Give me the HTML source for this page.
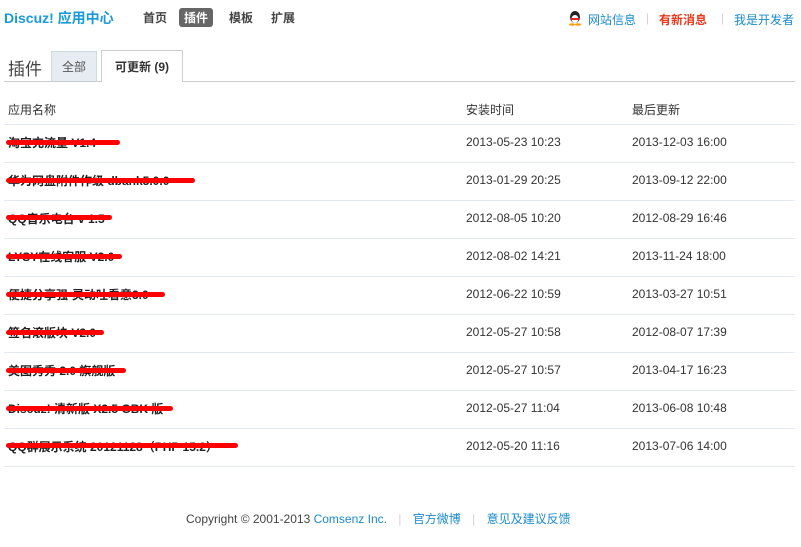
<!DOCTYPE html>
<html><head><meta charset="utf-8"><style>
*{margin:0;padding:0;box-sizing:border-box}
body{width:801px;height:547px;background:#fff;font-family:"Liberation Sans","Noto Sans CJK SC",sans-serif;font-size:12px;color:#333;position:relative;overflow:hidden}
.a{position:absolute;white-space:nowrap}
.logo{left:4px;top:8px;font-size:14px;font-weight:bold;color:#1a9bd7}
.nav{top:9px;font-size:12px;font-weight:bold;color:#444}
.navon{background:#666;color:#fff;border-radius:3px;padding:1px 5px}
.tl{top:11px;font-size:12px;color:#1a8ac8}
.sep{top:11px;color:#dcc}
.hline{position:absolute;left:4px;width:791px;height:1px;background:#e3e9ef}
.row{position:absolute;left:8px;font-size:12px;font-weight:bold;color:#222}
.red{position:absolute;height:5px;background:#f00;border-radius:3px;left:6px}
</style></head><body>
<div class="a logo">Discuz! 应用中心</div>
<div class="a nav" style="left:143px">首页</div>
<div class="a nav navon" style="left:179px;top:8px">插件</div>
<div class="a nav" style="left:229px">模板</div>
<div class="a nav" style="left:271px">扩展</div>
<svg class="a" style="left:568px;top:10px" width="14" height="16" viewBox="0 0 14 16"><ellipse cx="7" cy="7" rx="5" ry="6" fill="#222"/><ellipse cx="7" cy="9" rx="3.5" ry="4" fill="#fff"/><rect x="3" y="8" width="8" height="2" fill="#e22"/><ellipse cx="4" cy="14.5" rx="3" ry="1.3" fill="#f90"/><ellipse cx="10" cy="14.5" rx="3" ry="1.3" fill="#f90"/></svg>
<div class="a tl" style="left:588px">网站信息</div>
<div class="a sep" style="left:646px">|</div>
<div class="a tl" style="left:659px;color:#e83a1d;font-weight:bold">有新消息</div>
<div class="a sep" style="left:721px">|</div>
<div class="a tl" style="left:734px">我是开发者</div>

<div class="a" style="left:8px;top:55px;font-size:17px;color:#444">插件</div>
<div class="a" style="left:51px;top:51px;width:46px;height:31px;background:#e6ecf2;border:1px solid #cdd;border-bottom:none;color:#555;text-align:center;line-height:30px">全部</div>
<div class="a" style="left:101px;top:50px;width:82px;height:32px;background:#fff;border:1px solid #ccc;border-bottom:none;font-weight:bold;text-align:center;line-height:32px;z-index:2">可更新 (9)</div>
<div class="hline" style="top:81px;background:#ccc"></div>

<div class="a" style="left:8px;top:101px">应用名称</div>
<div class="a" style="left:466px;top:101px">安装时间</div>
<div class="a" style="left:632px;top:101px">最后更新</div>
<div class="hline" style="top:124px"></div>
<div class="hline" style="top:162px"></div>
<div class="hline" style="top:200px"></div>
<div class="hline" style="top:238px"></div>
<div class="hline" style="top:276px"></div>
<div class="hline" style="top:314px"></div>
<div class="hline" style="top:352px"></div>
<div class="hline" style="top:390px"></div>
<div class="hline" style="top:428px"></div>
<div class="hline" style="top:466px"></div>

<div class="a row" style="top:134px">淘宝充流量 V1.4</div><div class="red" style="top:140px;width:114px"></div>
<div class="a" style="left:466px;top:135px">2013-05-23 10:23</div><div class="a" style="left:632px;top:135px">2013-12-03 16:00</div>
<div class="a row" style="top:172px">华为网盘附件作级 dbank5.0.0</div><div class="red" style="top:178px;width:189px"></div>
<div class="a" style="left:466px;top:173px">2013-01-29 20:25</div><div class="a" style="left:632px;top:173px">2013-09-12 22:00</div>
<div class="a row" style="top:210px">QQ音乐电台 v 1.5</div><div class="red" style="top:215px;width:106px"></div>
<div class="a" style="left:466px;top:211px">2012-08-05 10:20</div><div class="a" style="left:632px;top:211px">2012-08-29 16:46</div>
<div class="a row" style="top:248px">LYSY在线客服 V2.0</div><div class="red" style="top:254px;width:116px"></div>
<div class="a" style="left:466px;top:249px">2012-08-02 14:21</div><div class="a" style="left:632px;top:249px">2013-11-24 18:00</div>
<div class="a row" style="top:286px">便捷分享强-灵动吐看意3.0</div><div class="red" style="top:292px;width:159px"></div>
<div class="a" style="left:466px;top:287px">2012-06-22 10:59</div><div class="a" style="left:632px;top:287px">2013-03-27 10:51</div>
<div class="a row" style="top:324px">签名滚版块 V2.0</div><div class="red" style="top:330px;width:98px"></div>
<div class="a" style="left:466px;top:325px">2012-05-27 10:58</div><div class="a" style="left:632px;top:325px">2012-08-07 17:39</div>
<div class="a row" style="top:362px">美图秀秀 2.0 旗舰版</div><div class="red" style="top:368px;width:120px"></div>
<div class="a" style="left:466px;top:363px">2012-05-27 10:57</div><div class="a" style="left:632px;top:363px">2013-04-17 16:23</div>
<div class="a row" style="top:400px">Discuz! 清新版 X2.5 GBK 版</div><div class="red" style="top:406px;width:167px"></div>
<div class="a" style="left:466px;top:401px">2012-05-27 11:04</div><div class="a" style="left:632px;top:401px">2013-06-08 10:48</div>
<div class="a row" style="top:438px">QQ群展示系统 20121128（PHP 15.2）</div><div class="red" style="top:443px;width:232px"></div>
<div class="a" style="left:466px;top:439px">2012-05-20 11:16</div><div class="a" style="left:632px;top:439px">2013-07-06 14:00</div>

<div class="a" style="left:186px;top:510px;color:#444">Copyright © 2001-2013 <span style="color:#1a8ac8">Comsenz Inc.</span> <span style="color:#dcc;margin:0 8px">|</span> <span style="color:#1a8ac8">官方微博</span> <span style="color:#dcc;margin:0 8px">|</span> <span style="color:#1a8ac8">意见及建议反馈</span></div>
</body></html>
